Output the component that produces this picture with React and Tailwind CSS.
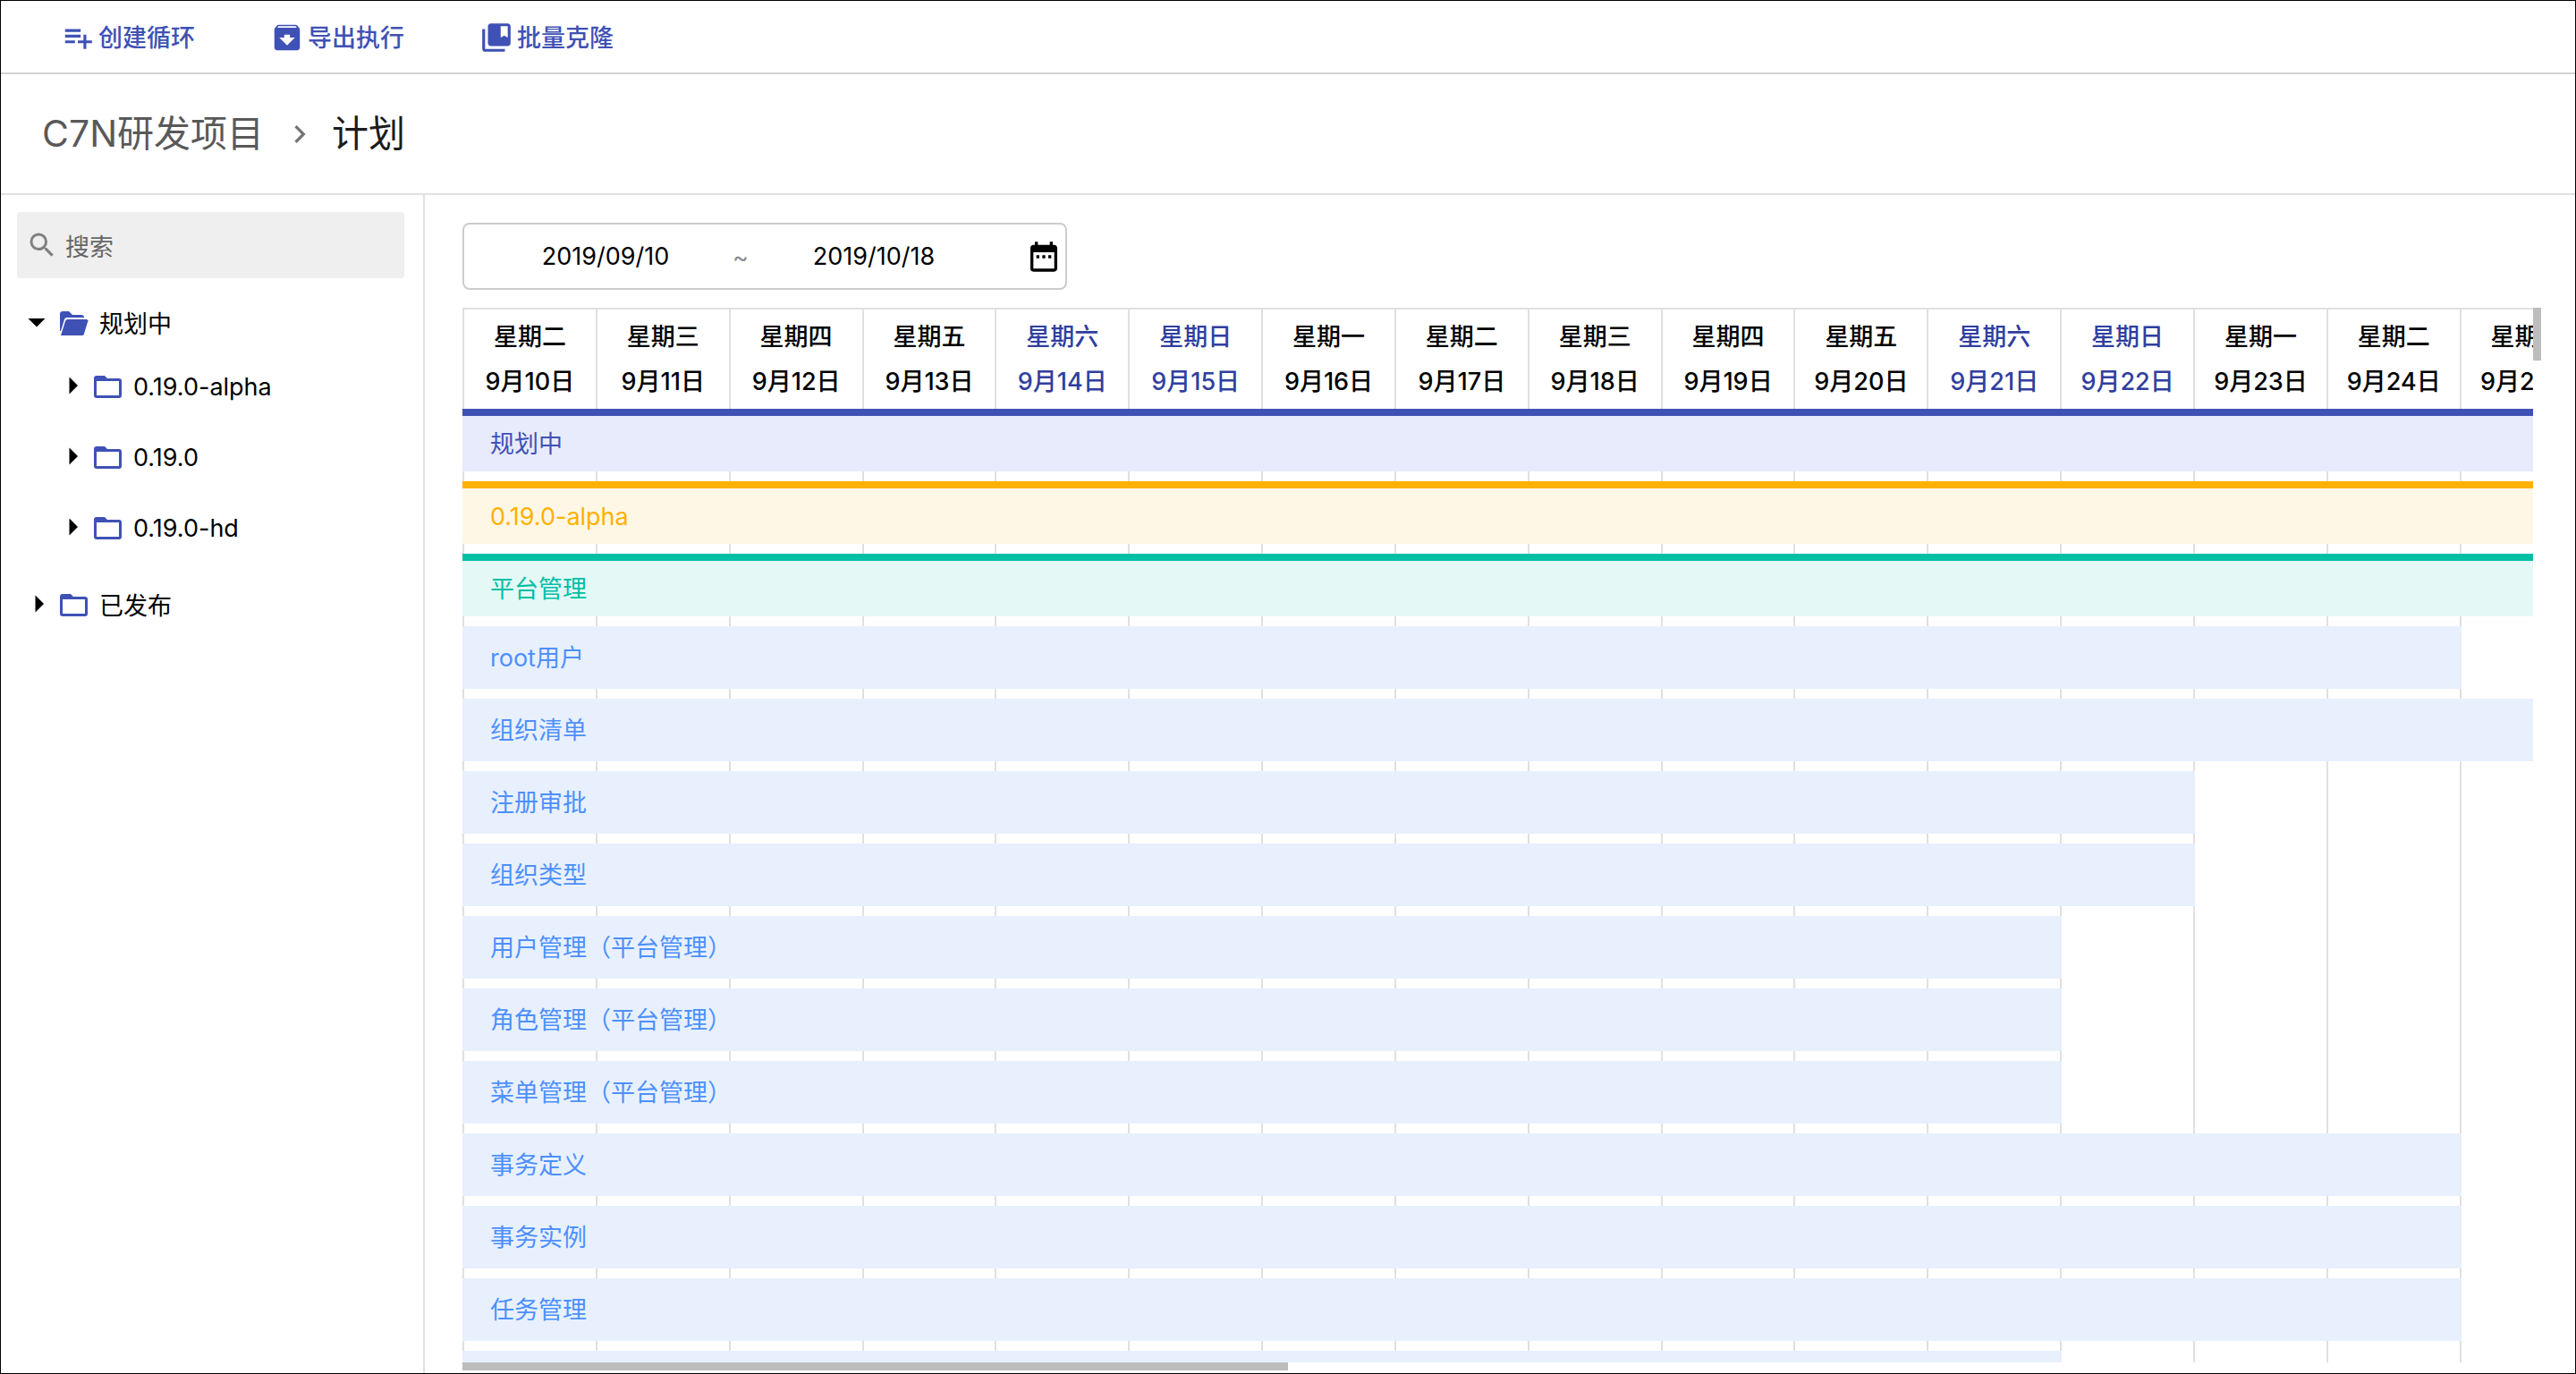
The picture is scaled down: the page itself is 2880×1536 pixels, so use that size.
import { MdPlaylistAdd, MdArchive, MdCollectionsBookmark, MdSearch, MdDateRange, MdChevronRight } from "react-icons/md";

const DAY_COUNT = 39;
const WEEKDAYS = ["星期日", "星期一", "星期二", "星期三", "星期四", "星期五", "星期六"];

const days = Array.from({ length: DAY_COUNT }, (_, i) => {
  const date = new Date(2019, 8, 10 + i);
  const weekday = date.getDay();
  return {
    weekday: WEEKDAYS[weekday],
    label: `${date.getMonth() + 1}月${date.getDate()}日`,
    weekend: weekday === 0 || weekday === 6,
  };
});

const PLAN = "border-t-8 border-[#3f51b5] bg-[#e8ebfc] text-[#3f51b5]";
const VERSION = "border-t-8 border-[#ffb100] bg-[#fff7e6] text-[#ffb100]";
const FOLDER = "border-t-8 border-[#00bfa5] bg-[#e4f8f6] text-[#00bfa5]";
const CYCLE = "bg-[#e8f0fe] text-[#4d90fe]";

const rows = [
  { name: "规划中", span: 39, style: PLAN },
  { name: "0.19.0-alpha", span: 39, style: VERSION },
  { name: "平台管理", span: 39, style: FOLDER },
  { name: "root用户", span: 15, style: CYCLE },
  { name: "组织清单", span: 18, style: CYCLE },
  { name: "注册审批", span: 13, style: CYCLE },
  { name: "组织类型", span: 13, style: CYCLE },
  { name: "用户管理（平台管理）", span: 12, style: CYCLE },
  { name: "角色管理（平台管理）", span: 12, style: CYCLE },
  { name: "菜单管理（平台管理）", span: 12, style: CYCLE },
  { name: "事务定义", span: 15, style: CYCLE },
  { name: "事务实例", span: 15, style: CYCLE },
  { name: "任务管理", span: 15, style: CYCLE },
  { name: "", span: 12, style: CYCLE },
];

function ToolbarButton({ icon: Icon, children }) {
  return (
    <button type="button" className="flex items-center gap-1 font-medium text-[#3f51b5]">
      <Icon className="size-[38px] shrink-0" />
      <span className="pt-0.5">{children}</span>
    </button>
  );
}

function Toolbar() {
  return (
    <div className="flex h-[82px] shrink-0 items-center gap-[84px] border-b-2 border-[#d3d3d3] pl-[67px] pt-0.5">
      <ToolbarButton icon={MdPlaylistAdd}>创建循环</ToolbarButton>
      <ToolbarButton icon={MdArchive}>导出执行</ToolbarButton>
      <ToolbarButton icon={MdCollectionsBookmark}>批量克隆</ToolbarButton>
    </div>
  );
}

function Breadcrumb() {
  return (
    <nav className="flex h-[135px] shrink-0 items-center border-b-2 border-[#e0e0e0] pl-[46px] text-[41px]">
      <a href="#project" className="text-[#595959]">C7N研发项目</a>
      <MdChevronRight className="ml-5 mr-4 size-10 text-[#757575]" />
      <span className="text-[#1c1c1c]">计划</span>
    </nav>
  );
}

function TreeItem({ name, open, child }) {
  return (
    <button
      type="button"
      className={`flex items-center ${child ? "h-[79px] pl-[76px]" : "h-[62px] pl-[38px]"}`}
    >
      {open ? (
        <svg viewBox="0 0 20 20" className="-ml-2 mb-1 mr-4 size-5"><path d="M0.500 6h19l-9.500 9.500z" /></svg>
      ) : (
        <svg viewBox="0 0 10 20" className="mb-1 mr-[18px] h-5 w-[10px]"><path d="M0.500 0.500l9.500 9.500-9.500 9.500z" /></svg>
      )}
      {open ? (
        <svg viewBox="0 0 32 28" className="mr-3 h-7 w-8 fill-[#3f51b5]">
          <path d="M0 3a3 3 0 0 1 3-3h7l4 4h10a3 3 0 0 1 3 3H8a3 3 0 0 0-3 2L1 22H0z" />
          <path d="M9 9h21a2 2 0 0 1 1 3l-4 13a2 2 0 0 1-2 2H1L6 11a3 3 0 0 1 3-2z" />
        </svg>
      ) : (
        <svg viewBox="0 0 32 28" className="mr-3 h-7 w-8 fill-[#3f51b5]">
          <path fillRule="evenodd" d="M3 1h9l3 3h13a3 3 0 0 1 3 3v16a3 3 0 0 1-3 3H3a3 3 0 0 1-3-3V4a3 3 0 0 1 3-3zM3 7v16h25V7z" />
        </svg>
      )}
      <span className="pt-0.5">{name}</span>
    </button>
  );
}

function Sidebar() {
  return (
    <aside className="flex w-[474px] shrink-0 flex-col border-r-2 border-[#e0e0e0] pt-[19px]">
      <label className="ml-[18px] mr-[21px] flex h-[74px] items-center gap-2 rounded bg-[#efefef] pl-[10px]">
        <MdSearch className="size-9 shrink-0 text-[#808080]" />
        <input type="search" aria-label="搜索" placeholder="搜索" className="min-w-0 flex-1 bg-transparent pt-[6px] outline-none placeholder:text-[#666666]" />
      </label>
      <div className="flex flex-col pt-5">
        <TreeItem name="规划中" open />
        <TreeItem name="0.19.0-alpha" child />
        <TreeItem name="0.19.0" child />
        <TreeItem name="0.19.0-hd" child />
        <div className="flex flex-col pt-4">
          <TreeItem name="已发布" />
        </div>
      </div>
    </aside>
  );
}

function DateRange() {
  return (
    <div className="flex h-[75px] w-[676px] items-center rounded-lg border-2 border-[#cccccc] pl-4 pr-1">
      <input aria-label="开始日期" defaultValue="2019/09/10" className="w-[284px] pt-0.5 text-center" />
      <span className="w-4 pt-1 text-center text-[#8c8c8c]">~</span>
      <input aria-label="结束日期" defaultValue="2019/10/18" className="w-[284px] pt-0.5 text-center" />
      <button type="button" aria-label="选择日期" className="ml-auto"><MdDateRange className="size-10" /></button>
    </div>
  );
}

function Timeline() {
  return (
    <div className="flex min-h-0 flex-1">
      <div className="flex min-w-0 flex-1 flex-col">
        <div className="min-h-0 flex-1 overflow-x-auto overflow-y-hidden [scrollbar-width:none]">
          <div className="grid h-full w-[5807px]">
            <div className="col-start-1 row-start-1 grid grid-cols-[repeat(39,1fr)] border-l-2 border-t-2 border-[#e0e0e0]">
              {days.map((day) => (
                <div
                  key={day.label}
                  className={`border-r-2 border-[#e0e0e0] pt-[6px] text-center font-medium leading-[50px] ${day.weekend ? "text-[#303f9f]" : "text-black"}`}
                >
                  <div>{day.weekday}</div>
                  <div>{day.label}</div>
                </div>
              ))}
            </div>
            <div className="col-start-1 row-start-1 flex h-0 flex-col gap-[11px] pt-[113px]">
              {rows.map((row, i) => (
                <div
                  key={i}
                  className={`flex h-[70px] shrink-0 items-center pl-[31px] pt-[3px] ${row.style}`}
                  style={{ width: `calc(2px + (100% - 2px) * ${row.span / DAY_COUNT})` }}
                >
                  {row.name}
                </div>
              ))}
            </div>
          </div>
        </div>
        <div className="mb-[3px] h-[9px] w-[calc(40%-3px)] shrink-0 bg-[#bdbdbd]" />
      </div>
      <div className="mr-[38px] h-[59px] w-[9px] shrink-0 bg-[#bdbdbd]" />
    </div>
  );
}

export default function App() {
  return (
    <div className="flex h-screen flex-col overflow-hidden border border-black bg-white font-[Inter,'Noto_Sans_CJK_SC',sans-serif] text-[27px] text-black">
      <Toolbar />
      <Breadcrumb />
      <div className="flex min-h-0 flex-1">
        <Sidebar />
        <main className="flex min-w-0 flex-1 flex-col gap-5 pl-[42px] pt-[31px]">
          <DateRange />
          <Timeline />
        </main>
      </div>
    </div>
  );
}
